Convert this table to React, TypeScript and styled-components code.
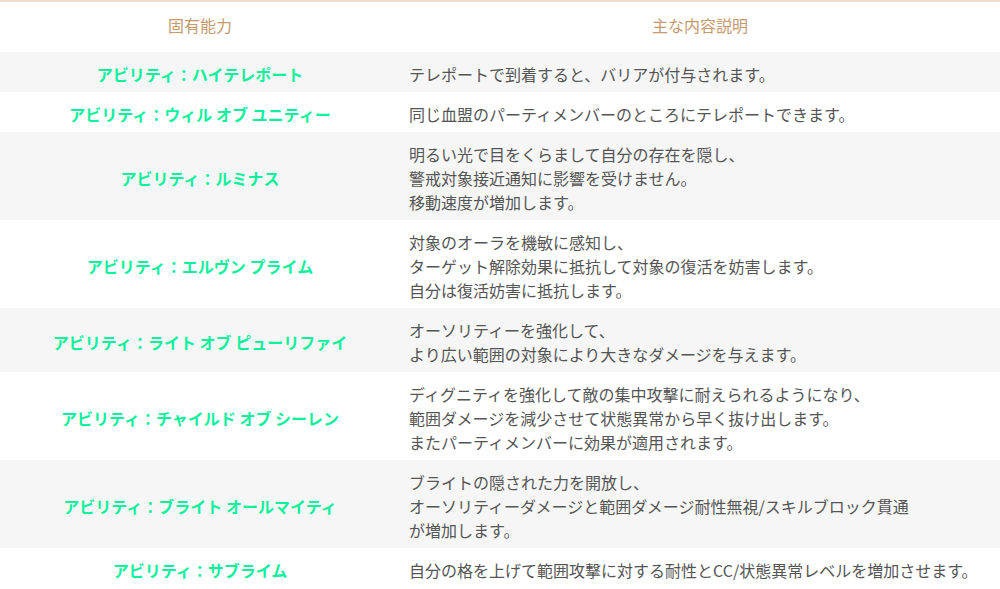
import React from "react";
import styled, { createGlobalStyle } from "styled-components";

const Global = createGlobalStyle`
  html, body { margin: 0; padding: 0; background: #fff; }
  body { font-family: "Noto Sans CJK JP", "Noto Sans", sans-serif; }
`;

const Table = styled.table`
  width: 1000px;
  border-collapse: collapse;
  table-layout: fixed;
  border-top: 2px solid #efdccd;
`;

const HeadCell = styled.th`
  height: 46px;
  padding: 0 0 4px 0;
  font-size: 16px;
  font-weight: 400;
  color: #c49a6e;
  text-align: center;
  vertical-align: middle;
`;

const Row = styled.tr<{ $shaded: boolean }>`
  background: ${(p) => (p.$shaded ? "#f6f6f6" : "#ffffff")};
`;

const NameCell = styled.td`
  padding: 10px 0 6px;
  text-align: center;
  vertical-align: middle;
  font-size: 16px;
  font-weight: 700;
  line-height: 24px;
  color: #0ff09c;
`;

const DescCell = styled.td`
  padding: 10px 0 6px 9px;
  text-align: left;
  vertical-align: middle;
  font-size: 16px;
  line-height: 24px;
  color: #555555;
`;

const Line = styled.div`
  white-space: nowrap;
`;

const rows: { name: string; desc: string[] }[] = [
  { name: "アビリティ：ハイテレポート", desc: ["テレポートで到着すると、バリアが付与されます。"] },
  { name: "アビリティ：ウィル オブ ユニティー", desc: ["同じ血盟のパーティメンバーのところにテレポートできます。"] },
  {
    name: "アビリティ：ルミナス",
    desc: ["明るい光で目をくらまして自分の存在を隠し、", "警戒対象接近通知に影響を受けません。", "移動速度が増加します。"],
  },
  {
    name: "アビリティ：エルヴン プライム",
    desc: ["対象のオーラを機敏に感知し、", "ターゲット解除効果に抵抗して対象の復活を妨害します。", "自分は復活妨害に抵抗します。"],
  },
  {
    name: "アビリティ：ライト オブ ピューリファイ",
    desc: ["オーソリティーを強化して、", "より広い範囲の対象により大きなダメージを与えます。"],
  },
  {
    name: "アビリティ：チャイルド オブ シーレン",
    desc: [
      "ディグニティを強化して敵の集中攻撃に耐えられるようになり、",
      "範囲ダメージを減少させて状態異常から早く抜け出します。",
      "またパーティメンバーに効果が適用されます。",
    ],
  },
  {
    name: "アビリティ：ブライト オールマイティ",
    desc: ["ブライトの隠された力を開放し、", "オーソリティーダメージと範囲ダメージ耐性無視/スキルブロック貫通", "が増加します。"],
  },
  { name: "アビリティ：サブライム", desc: ["自分の格を上げて範囲攻撃に対する耐性とCC/状態異常レベルを増加させます。"] },
];

export default function App() {
  return (
    <>
      <Global />
      <Table>
        <colgroup>
          <col style={{ width: 400 }} />
          <col style={{ width: 600 }} />
        </colgroup>
        <thead>
          <tr>
            <HeadCell>固有能力</HeadCell>
            <HeadCell>主な内容説明</HeadCell>
          </tr>
        </thead>
        <tbody>
          {rows.map((r, i) => (
            <Row key={i} $shaded={i % 2 === 0}>
              <NameCell>{r.name}</NameCell>
              <DescCell>
                {r.desc.map((d, j) => (
                  <Line key={j}>{d}</Line>
                ))}
              </DescCell>
            </Row>
          ))}
        </tbody>
      </Table>
    </>
  );
}
